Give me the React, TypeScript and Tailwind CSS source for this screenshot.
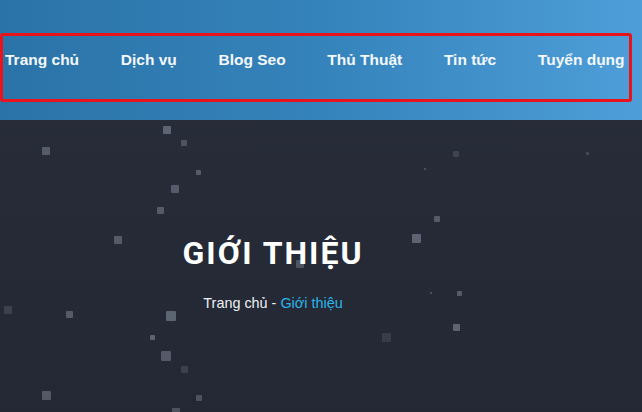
const menu = ["Trang chủ", "Dịch vụ", "Blog Seo", "Thủ Thuật", "Tin tức", "Tuyển dụng"]

// decorative particles floating on the dark banner
const dots: [number, number, number, number][] = [
  [163, 6, 8, 0.35], [181, 20, 6, 0.25], [42, 27, 8, 0.3], [196, 50, 5, 0.3],
  [171, 65, 8, 0.3], [157, 87, 7, 0.3], [114, 116, 8, 0.3], [296, 140, 8, 0.25],
  [453, 31, 6, 0.15], [434, 96, 6, 0.3], [412, 114, 9, 0.35], [586, 32, 3, 0.2],
  [4, 186, 8, 0.15], [66, 191, 7, 0.3], [166, 191, 10, 0.35], [150, 215, 5, 0.35],
  [161, 231, 10, 0.3], [181, 246, 7, 0.15], [42, 271, 9, 0.3], [196, 275, 6, 0.25],
  [172, 288, 8, 0.25], [457, 171, 5, 0.3], [453, 204, 7, 0.35], [382, 213, 9, 0.12],
  [430, 172, 2, 0.3], [424, 48, 2, 0.3],
]

export default function App() {
  return (
    <div className="w-[642px] h-[412px] overflow-hidden" style={{ fontFamily: "Arial, 'Liberation Sans', sans-serif" }}>
      <header className="w-full h-[120px] pt-[33px] bg-gradient-to-r from-[#2a73a7] via-[#3583bb] to-[#4e9ed9]">
        <nav className="w-[632px] h-[69px] border-[3px] border-[#e8131b] rounded-[3px]">
          <ul className="flex items-center gap-[41.7px] pl-[2px] pt-[12px] text-[15.5px] font-bold text-[#f4f8fb] whitespace-pre">
            {menu.map((m) => (
              <li key={m}>{m}</li>
            ))}
          </ul>
        </nav>
      </header>
      <section className="relative w-full h-[292px] bg-gradient-to-b from-[#272c39] to-[#232834]">
        {dots.map(([x, y, s, o], i) => (
          <span
            key={i}
            className="absolute bg-[#8a90a0] rounded-[1px]"
            style={{ left: x, top: y, width: s, height: s, opacity: o * 1.6 }}
          />
        ))}
        <div className="relative w-[546px] flex flex-col items-center pt-[115px]">
          <h1 className="text-[32px] leading-[37px] font-bold tracking-[2px] text-white" style={{ fontFamily: "Roboto, sans-serif" }}>
            GIỚI THIỆU
          </h1>
          <p className="mt-[21px] text-[14.4px] text-[#eef1f5]">
            Trang chủ - <span className="text-[#2cb5ea]">Giới thiệu</span>
          </p>
        </div>
      </section>
    </div>
  )
}
